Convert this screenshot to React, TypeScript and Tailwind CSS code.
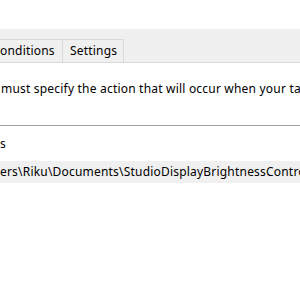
export default function App() {
  const font = { fontFamily: '"Noto Sans", "Open Sans", sans-serif' };
  return (
    <div className="w-[300px] h-[300px] overflow-hidden bg-white text-[12px] tracking-[0.2px] text-black" style={font}>
      <div className="h-[29px]" />
      {/* tab strip */}
      <div className="h-[34px] bg-[#f0f0f0] border-b border-[#dadada] flex items-end">
        <div className="h-[23px] w-[63px] border-r border-t border-[#dadada] flex items-center whitespace-nowrap overflow-hidden">
          <span>onditions</span>
        </div>
        <div className="h-[23px] w-[61px] border-r border-t border-[#dadada] flex items-center pl-[7px] whitespace-nowrap">
          Settings
        </div>
      </div>
      <div className="pt-[18px] pl-[1px] whitespace-nowrap leading-[16px] overflow-hidden">
        must specify the action that will occur when your task starts.
      </div>
      <div className="mt-[28px] border-t border-[#a0a0a0]" />
      <div className="pt-[10px] leading-[16px]">s</div>
      <div className="mt-[9px] h-[22px] bg-[#f0f0f0] flex items-center whitespace-nowrap overflow-hidden">
        ers\Riku\Documents\StudioDisplayBrightnessControl\StudioDisplayBrightnessControl.exe
      </div>
    </div>
  );
}
